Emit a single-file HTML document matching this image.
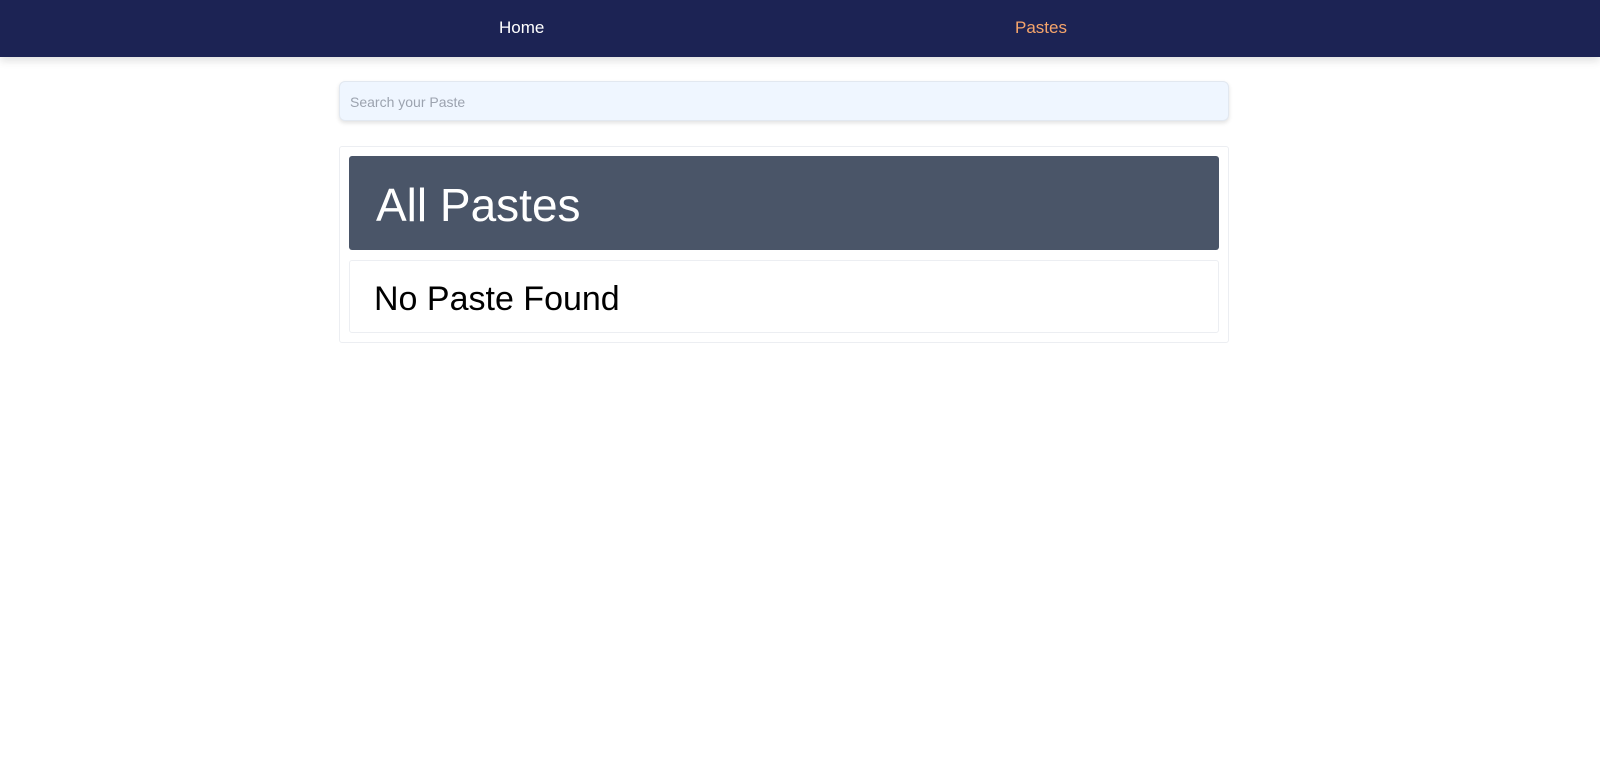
<!DOCTYPE html>
<html><head><style>
*{box-sizing:border-box;margin:0;padding:0}
body{width:1600px;height:774px;background:#fff;font-family:"Liberation Sans",sans-serif;position:relative;overflow:hidden}
nav{position:absolute;left:0;top:0;width:1600px;height:57px;background:#1c2354;box-shadow:0 4px 8px rgba(0,0,0,.12)}
nav span{position:absolute;top:18px;font-size:17px;line-height:20px}
.search{position:absolute;left:339px;top:81px;width:890px;height:40px;background:#eff6ff;border:1px solid #e2e8f0;border-radius:6px;box-shadow:0 2px 4px rgba(0,0,0,.12);font-size:14px;color:#9ca3af;padding:12px 0 0 10px}
.card{position:absolute;left:339px;top:146px;width:890px;height:197px;border:1px solid #eceef2;border-radius:3px}
.head{position:absolute;left:349px;top:156px;width:870px;height:94px;background:#4a5568;border-radius:3px;color:#fff;font-size:46px;padding:23px 0 0 27px;line-height:52px}
.empty{position:absolute;left:349px;top:260px;width:870px;height:73px;border:1px solid #eceef2;border-radius:3px;font-size:34px;padding:18px 0 0 24px;line-height:40px;color:#000}
</style></head><body>
<nav><span style="left:499px;color:#fff">Home</span><span style="left:1015px;color:#f6a56b">Pastes</span></nav>
<div class="search">Search your Paste</div>
<div class="card"></div>
<div class="head">All Pastes</div>
<div class="empty">No Paste Found</div>
</body></html>
